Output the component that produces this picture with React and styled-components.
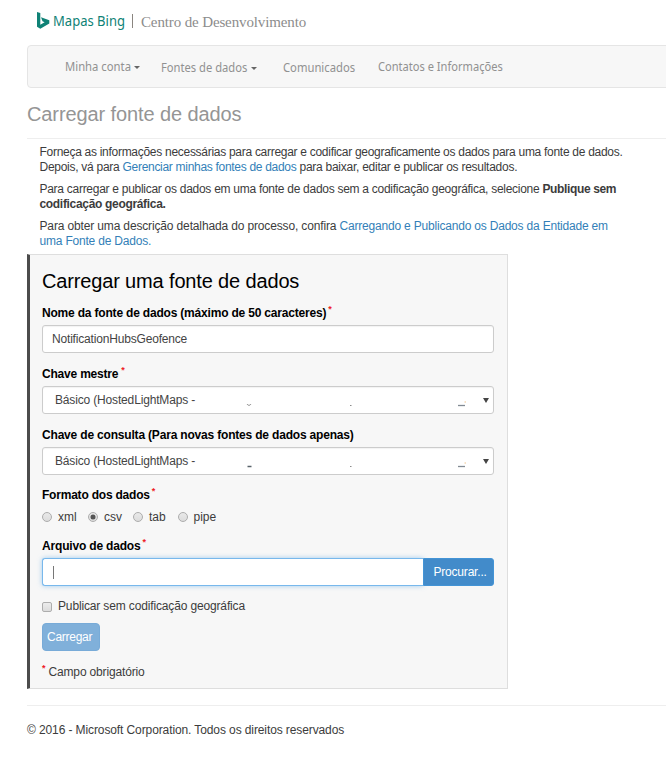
import React from 'react';
import styled, { createGlobalStyle, css } from 'styled-components';

const GlobalStyle = createGlobalStyle`
  * { box-sizing: border-box; }
  html, body { margin: 0; background: #fff; overflow: hidden; }
  body {
    font-family: "Liberation Sans", Arial, sans-serif;
    font-size: 12px;
    line-height: 15px;
    color: #3c3c3c;
  }
`;

const Page = styled.div`
  width: 666px;
  height: 768px;
  padding-left: 27px;
  overflow: hidden;
  white-space: nowrap;
`;

const Text = styled.span`
  letter-spacing: ${(p) => p.$ls || 0}px;
`;

const Header = styled.header`
  display: flex;
  align-items: center;
  height: 45px;
  padding: 0 0 3px 9px;
`;

const BingMark = styled.svg`
  width: 14px;
  height: 18px;
  margin-right: 3px;
`;

const Brand = styled.span`
  width: 79px;
  padding-bottom: 1px;
  font-family: "Noto Sans", sans-serif;
  font-size: 15px;
  transform: scaleX(0.869);
  transform-origin: left;
  color: #0f8276;
`;

const Divider = styled.span`
  width: 1px;
  height: 14px;
  margin-right: 8px;
  background: #8a8580;
`;

const Center = styled.span`
  padding-top: 2px;
  font-family: "Liberation Serif", serif;
  font-size: 15px;
  letter-spacing: -0.13px;
  color: #8c8c8c;
`;

const Nav = styled.nav`
  display: flex;
  align-items: center;
  height: 43px;
  margin-right: -8px;
  padding-left: 36.5px;
  background: #f7f7f7;
  border: 1px solid #e5e5e5;
  border-radius: 4px;
`;

const NavItem = styled.a`
  display: flex;
  align-items: center;
  flex: none;
  width: ${(p) => p.$w}px;
  padding-top: ${(p) => p.$drop || 0}px;
  font-family: "Noto Sans", sans-serif;
  font-size: 13px;
  color: #919191;
`;

const NavText = styled.span`
  width: ${(p) => p.$w}px;
  transform: scaleX(${(p) => p.$scale || 0.86});
  transform-origin: left;
`;

const Caret = styled.i`
  margin: 2px 0 0 3px;
  border: 3px solid transparent;
  border-top: 3px solid #666;
  border-bottom: 0;
`;

const PageTitle = styled.h1`
  height: 51px;
  margin: 0;
  padding-top: 14px;
  border-bottom: 1px solid #eee;
  font-size: 20px;
  line-height: 24px;
  font-weight: 400;
  letter-spacing: -0.1px;
  color: #959595;
`;

const Intro = styled.div`
  height: 115px;
  padding: 6px 0 0 12.5px;
`;

const Paragraph = styled.p`
  margin: 0 0 7px;
`;

const Link = styled.a`
  color: #337fb8;
  letter-spacing: ${(p) => p.$ls}px;
`;

const Strong = styled.strong`
  letter-spacing: ${(p) => p.$ls}px;
`;

const Panel = styled.form`
  width: 481px;
  height: 435px;
  padding: 14px 13px 0 12px;
  background: #f7f7f7;
  border: 1px solid #dedede;
  border-left: 3px solid #4c4c4c;
`;

const PanelTitle = styled.h2`
  height: 36px;
  margin: 0;
  font-size: 20px;
  line-height: 24px;
  font-weight: 400;
  letter-spacing: -0.15px;
  color: #000;
`;

const Field = styled.div`
  height: ${(p) => p.$h || 61}px;
`;

const Label = styled.label`
  display: flex;
  height: 20px;
  padding-top: 1px;
  font-weight: 700;
  letter-spacing: ${(p) => p.$ls}px;
  color: #000;
`;

const Required = styled.sup`
  margin: -4px 0 0 ${(p) => p.$gap || 2}px;
  font-size: 9px;
  line-height: 15px;
  font-weight: 700;
  letter-spacing: 0;
  color: #ee1c25;
`;

const control = css`
  display: flex;
  align-items: center;
  width: 452px;
  height: 28px;
  background: #fff;
  border: 1px solid #ccc;
  border-radius: 3px;
  box-shadow: inset 0 1px 1px rgba(0, 0, 0, 0.05);
  color: #444;
`;

const TextBox = styled.div`
  ${control}
  padding-left: 9px;
  letter-spacing: -0.18px;
`;

const SelectBox = styled.div`
  ${control}
  padding-left: 12px;
  letter-spacing: -0.16px;
`;

const Residue = styled.svg`
  width: 224px;
  height: 10px;
  margin: 10px 0 0 50px;
`;

const Arrow = styled.i`
  margin: 0 4px 0 auto;
  border: 3px solid transparent;
  border-top: 5px solid #444;
  border-bottom: 0;
`;

const RadioRow = styled.div`
  display: flex;
  align-items: center;
  height: 20px;
`;

const RadioLabel = styled.label`
  display: flex;
  align-items: center;
  width: ${(p) => p.$w}px;
`;

const Radio = styled.span`
  display: flex;
  align-items: center;
  justify-content: center;
  width: 10px;
  height: 10px;
  margin-right: 6px;
  border: 1px solid #adadad;
  border-radius: 50%;
  background: linear-gradient(#e9e9e9, #dcdcdc);

  &::after {
    content: "";
    width: 4px;
    height: 4px;
    border-radius: 50%;
    background: ${(p) => (p.$on ? '#555' : 'transparent')};
    box-shadow: 0 0 0 0.5px ${(p) => (p.$on ? '#555' : 'transparent')};
  }
`;

const FileRow = styled.div`
  display: flex;
  width: 452px;
  height: 28px;
`;

const FileInput = styled.div`
  flex: 1;
  padding: 7px 0 0 10px;
  background: #fff;
  border: 1px solid #78b8ec;
  border-right: 0;
  border-radius: 3px 0 0 3px;
  box-shadow: 0 0 5px rgba(102, 175, 233, 0.6);
`;

const TextCursor = styled.i`
  display: block;
  width: 1px;
  height: 13px;
  background: #777;
`;

const BrowseButton = styled.div`
  position: relative;
  width: 71px;
  padding-left: 9.5px;
  background: #428bca;
  border: 1px solid #4394d6;
  border-radius: 0 3px 3px 0;
  line-height: 27px;
  letter-spacing: -0.2px;
  color: #fff;
`;

const CheckRow = styled.label`
  display: flex;
  align-items: center;
  height: 17px;
  margin-bottom: 8px;
  letter-spacing: -0.146px;
`;

const Checkbox = styled.span`
  width: 10px;
  height: 10px;
  margin: 0 6px 0 0;
  border: 1px solid #adadad;
  border-radius: 2px;
  background: linear-gradient(#ececec, #dcdcdc);
`;

const SubmitButton = styled.div`
  width: 58px;
  height: 28px;
  padding-left: 4px;
  background: #80b0da;
  border: 1px solid #78abd8;
  border-radius: 4px;
  line-height: 26px;
  letter-spacing: -0.26px;
  color: #fff;
`;

const Note = styled.div`
  display: flex;
  padding-top: 14px;
  letter-spacing: -0.16px;
`;

const NoteMark = styled(Required)`
  margin: -4px 3px 0 0;
`;

const Footer = styled.footer`
  height: 40px;
  margin-top: 16px;
  padding-top: 17px;
  border-top: 1px solid #eee;
  letter-spacing: -0.105px;
`;

function KeySelect({ dark }) {
  return (
    <SelectBox>
      Básico (HostedLightMaps -
      <Residue viewBox="0 0 224 10">
        <path
          d={dark ? 'M2.500 5.500h4' : 'M2 4l1 1.200h2l1-1.200'}
          fill="none"
          stroke={dark ? '#58636a' : '#999'}
          strokeWidth={dark ? 1.5 : 1}
        />
        <path d="M105 5.500h1.500" stroke="#8a8a8a" />
        <path d="M213 5.500h7" stroke="#828a93" strokeWidth="1.300" />
        <path d="M219.500 2h1.500" stroke="#efc48e" />
      </Residue>
      <Arrow />
    </SelectBox>
  );
}

const formats = [
  ['xml', 46],
  ['csv', 45],
  ['tab', 44.5],
  ['pipe', 50],
];

export default function App() {
  return (
    <Page>
      <GlobalStyle />
      <Header>
        <BingMark viewBox="0 0 14 18">
          <path
            d="M1 0L4.300 1V12.700L8.600 10.300L6.500 9.300L5 5.200L13.300 8.200V11.600L4.300 16.800L1 14.800Z"
            fill="#0f8276"
          />
        </BingMark>
        <Brand>Mapas Bing</Brand>
        <Divider />
        <Center>Centro de Desenvolvimento</Center>
      </Header>
      <Nav>
        <NavItem $w={96.5}>
          <NavText $w={66} $scale={0.868}>Minha conta</NavText>
          <Caret />
        </NavItem>
        <NavItem $w={121.5} $drop={2}>
          <NavText $w={87}>Fontes de dados</NavText>
          <Caret />
        </NavItem>
        <NavItem $w={95.5} $drop={2}>
          <NavText $w={72} $scale={0.866}>Comunicados</NavText>
        </NavItem>
        <NavItem $w={130}>
          <NavText $w={125} $scale={0.853}>Contatos e Informações</NavText>
        </NavItem>
      </Nav>
      <PageTitle>Carregar fonte de dados</PageTitle>
      <Intro>
        <Paragraph>
          <Text $ls={-0.285}>Forneça as informações necessárias para carregar e codificar geograficamente os dados para uma fonte de dados.</Text>
          <br />
          <Text $ls={-0.27}>Depois, vá para </Text>
          <Link $ls={-0.3}>Gerenciar minhas fontes de dados</Link>
          <Text $ls={-0.26}> para baixar, editar e publicar os resultados.</Text>
        </Paragraph>
        <Paragraph>
          <Text $ls={-0.278}>Para carregar e publicar os dados em uma fonte de dados sem a codificação geográfica, selecione </Text>
          <Strong $ls={-0.36}>Publique sem</Strong>
          <br />
          <Strong $ls={-0.32}>codificação geográfica.</Strong>
        </Paragraph>
        <Paragraph>
          <Text $ls={-0.146}>Para obter uma descrição detalhada do processo, confira </Text>
          <Link $ls={-0.195}>Carregando e Publicando os Dados da Entidade em</Link>
          <br />
          <Link $ls={-0.2}>uma Fonte de Dados.</Link>
        </Paragraph>
      </Intro>
      <Panel>
        <PanelTitle>Carregar uma fonte de dados</PanelTitle>
        <Field>
          <Label $ls={-0.19}>Nome da fonte de dados (máximo de 50 caracteres)<Required>*</Required></Label>
          <TextBox>NotificationHubsGeofence</TextBox>
        </Field>
        <Field>
          <Label $ls={-0.2}>Chave mestre<Required $gap={3}>*</Required></Label>
          <KeySelect />
        </Field>
        <Field $h={60}>
          <Label $ls={-0.185}>Chave de consulta (Para novas fontes de dados apenas)</Label>
          <KeySelect dark />
        </Field>
        <Field $h={51}>
          <Label $ls={-0.21}>Formato dos dados<Required>*</Required></Label>
          <RadioRow>
            {formats.map(([name, w]) => (
              <RadioLabel key={name} $w={w}>
                <Radio $on={name === 'csv'} />
                {name}
              </RadioLabel>
            ))}
          </RadioRow>
        </Field>
        <Field $h={60}>
          <Label $ls={-0.18}>Arquivo de dados<Required>*</Required></Label>
          <FileRow>
            <FileInput><TextCursor /></FileInput>
            <BrowseButton>Procurar...</BrowseButton>
          </FileRow>
        </Field>
        <CheckRow><Checkbox />Publicar sem codificação geográfica</CheckRow>
        <SubmitButton>Carregar</SubmitButton>
        <Note><NoteMark>*</NoteMark>Campo obrigatório</Note>
      </Panel>
      <Footer>© 2016 - Microsoft Corporation. Todos os direitos reservados</Footer>
    </Page>
  );
}
